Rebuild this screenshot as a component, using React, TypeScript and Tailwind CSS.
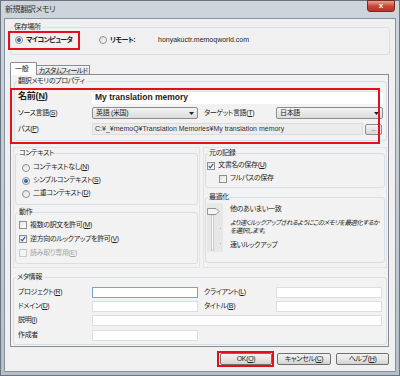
import React from "react";

function Acc({ t, k }: { t: string; k: string }) {
  return (
    <span className="whitespace-nowrap">
      {t}(<u>{k}</u>)
    </span>
  );
}

function Radio({ checked = false }: { checked?: boolean }) {
  return (
    <span className="w-[8px] h-[8px] shrink-0 rounded-full border border-[#8e8f8f] bg-linear-to-br from-[#dcdcdc] to-white flex items-center justify-center">
      {checked && <span className="w-[4px] h-[4px] rounded-full bg-[#2a6cb3]" />}
    </span>
  );
}

function Check({ checked = false, disabled = false }: { checked?: boolean; disabled?: boolean }) {
  return (
    <span
      className={
        "w-[8px] h-[8px] shrink-0 border flex items-center justify-center " +
        (disabled ? "border-[#c9c9c9] bg-[#f4f4f4]" : "border-[#8f8f8f] bg-linear-to-br from-[#e2e2e2] to-white")
      }
    >
      {checked && (
        <svg width="6" height="6" viewBox="0 0 6 6">
          <path d="M0.8 3.2 L2.3 4.8 L5.2 0.8" fill="none" stroke="#3b5a9e" strokeWidth="1.2" />
        </svg>
      )}
    </span>
  );
}

function Group({ title, className, children }: { title: string; className: string; children?: React.ReactNode }) {
  return (
    <fieldset className={"border border-[#d5dfe5] rounded-[3px] " + className}>
      <legend className="ml-[2px] px-[1px] leading-[10px]">{title}</legend>
      {children}
    </fieldset>
  );
}

function Select({ value, w }: { value: string; w: string }) {
  return (
    <div className={"h-[12px] border border-[#8c8c8c] rounded-[2px] bg-linear-to-b from-[#f3f3f3] to-[#dcdcdc] flex items-center justify-between pl-[3px] pr-[3px] " + w}>
      <span>{value}</span>
      <svg width="5" height="3" viewBox="0 0 5 3">
        <path d="M0 0 H5 L2.5 3 Z" fill="#222" />
      </svg>
    </div>
  );
}

function Field({ w, focus = false }: { w: string; focus?: boolean }) {
  return <div className={"h-[11px] bg-white border " + (focus ? "border-[#7da2ce]" : "border-[#dadde2]") + " " + w} />;
}

function Btn({ w, children }: { w: string; children: React.ReactNode }) {
  return (
    <div className={"h-[12px] rounded-[2px] border border-[#707070] bg-linear-to-b from-[#f2f2f2] via-[#e6e6e6] to-[#d2d2d2] flex items-center justify-center " + w}>
      {children}
    </div>
  );
}

export default function App() {
  return (
    <div className="relative w-[400px] h-[376px] border border-[#6b737c] bg-linear-to-b from-[#cdd4dc] to-[#b5bfca] flex flex-col text-[7px] tracking-[-0.35px] text-[#1e1e1e] font-['Liberation_Sans','Noto_Sans_CJK_JP',sans-serif] [font-feature-settings:'palt']">
      {/* title bar */}
      <div className="h-[17px] flex items-start justify-between">
        <span className="ml-[4px] mt-[3px] text-[8px] tracking-[-0.4px] text-[#333]">新規翻訳メモリ</span>
        <div className="mr-[4px] w-[28px] h-[12px] -mt-px rounded-b-[3px] border border-[#7a2a22] bg-linear-to-b from-[#e8a493] via-[#c9483a] to-[#b8312a] flex items-center justify-center text-white text-[8px] font-bold leading-none tracking-normal">
          x
        </div>
      </div>

      {/* client */}
      <div className="mx-[3px] h-[354px] border border-[#8593a1] bg-[#f0f0f0] flex flex-col">
        <Group title="保存場所" className="ml-[5px] mt-[3px] w-[380px] h-[33px]">
          <div className="mt-[2px] h-[12px] pl-[4px] flex items-center">
            <div className="w-[84px] flex items-center gap-[3px]">
              <Radio checked />
              <span className="font-bold tracking-[-0.7px]">マイコンピュータ</span>
            </div>
            <div className="w-[59px] flex items-center gap-[3px]">
              <Radio />
              <span className="font-bold tracking-[-0.5px]">リモート:</span>
            </div>
            <span className="tracking-normal">honyakuctr.memoqworld.com</span>
          </div>
        </Group>

        {/* tabs */}
        <div className="mt-[7px] ml-[5px] h-[13px] flex items-end">
          <div className="relative z-10 w-[27px] h-[13px] border border-b-0 border-[#898c95] rounded-t-[2px] bg-white pl-[4px] pt-[1px]">
            一般
          </div>
          <div className="w-[53px] h-[10px] border border-l-0 border-b-0 border-[#898c95] bg-linear-to-b from-[#f4f4f4] to-[#dadada] flex items-center justify-center leading-none tracking-[-0.7px] whitespace-nowrap">
            カスタムフィールド
          </div>
        </div>

        {/* tab page */}
        <div className="ml-[5px] -mt-px w-[379px] h-[273px] border border-[#898c95] bg-[#f2f2f2] flex flex-col">
          <Group title="翻訳メモリのプロパティ" className="ml-[3px] mt-[1px] w-[373px] h-[65px]">
            <div className="pt-[3px] px-[3px] flex flex-col">
              <div className="h-[16px] flex items-center">
                <span className="w-[74px] text-[9px] font-bold tracking-[-0.2px]">
                  名前(<u>N</u>)
                </span>
                <div className="flex-1 h-[13px] bg-white border-t border-[#e2e2e2] flex items-center pl-[3px] text-[8.5px] font-bold tracking-normal">
                  My translation memory
                </div>
              </div>
              <div className="h-[16px] flex items-center">
                <span className="w-[74px]">
                  <Acc t="ソース言語" k="S" />
                </span>
                <Select value="英語 (米国)" w="w-[106px]" />
                <span className="ml-[6px] w-[72px]">
                  <Acc t="ターゲット言語" k="T" />
                </span>
                <Select value="日本語" w="w-[107px]" />
              </div>
              <div className="h-[16px] flex items-center">
                <span className="w-[74px]">
                  <Acc t="パス" k="P" />
                </span>
                <div className="w-[271px] h-[12px] bg-[#ececec] border border-[#dcdcdc] flex items-center pl-[2px] text-[#333] whitespace-nowrap tracking-normal">
                  C:¥_¥memoQ¥Translation Memories¥My translation memory
                </div>
                <div className="ml-[2px] w-[17px] h-[11px] rounded-[2px] border border-[#8c8c8c] bg-linear-to-b from-[#f3f3f3] to-[#d6d6d6] flex items-center justify-center text-[6px] leading-none">
                  ...
                </div>
              </div>
            </div>
          </Group>

          {/* two columns */}
          <div className="mt-[6px] ml-[2px] h-[121px] flex gap-[3px]">
            <div className="w-[187px] border border-[#e0e4e8] flex flex-col">
              <Group title="コンテキスト" className="mx-[1px] h-[57px]">
                <div className="pt-[3px] pl-[6px] flex flex-col">
                  <div className="h-[13px] flex items-center gap-[3px]">
                    <Radio />
                    <Acc t="コンテキストなし" k="N" />
                  </div>
                  <div className="h-[13px] flex items-center gap-[3px]">
                    <Radio checked />
                    <Acc t="シンプルコンテキスト" k="S" />
                  </div>
                  <div className="h-[13px] flex items-center gap-[3px]">
                    <Radio />
                    <Acc t="二重コンテキスト" k="D" />
                  </div>
                </div>
              </Group>
              <Group title="動作" className="mx-[1px] mt-[2px] h-[57px]">
                <div className="pt-[1px] pl-[3px] flex flex-col">
                  <div className="h-[14px] flex items-center gap-[3px]">
                    <Check />
                    <Acc t="複数の訳文を許可" k="M" />
                  </div>
                  <div className="h-[14px] flex items-center gap-[3px]">
                    <Check checked />
                    <Acc t="逆方向のルックアップを許可" k="V" />
                  </div>
                  <div className="h-[14px] flex items-center gap-[3px] text-[#a3a3a3]">
                    <Check disabled />
                    <Acc t="読み取り専用" k="E" />
                  </div>
                </div>
              </Group>
            </div>

            <div className="w-[184px] border border-[#e0e4e8] flex flex-col">
              <Group title="元の記録" className="mx-[1px] h-[40px]">
                <div className="pt-[1px] pl-[1px] flex flex-col">
                  <div className="h-[13px] flex items-center gap-[3px]">
                    <Check checked />
                    <Acc t="文書名の保存" k="U" />
                  </div>
                  <div className="h-[13px] pl-[12px] flex items-center gap-[3px]">
                    <Check />
                    <span>フルパスの保存</span>
                  </div>
                </div>
              </Group>
              <Group title="最適化" className="mx-[1px] mt-[4px] h-[71px]">
                <div className="mt-[1px] pl-[1px] flex">
                  <div className="w-[16px] h-[49px] bg-[#e7e7e7]">
                    <svg width="16" height="49" viewBox="0 0 16 49">
                      <rect x="4.5" y="12" width="2" height="35" fill="#fdfdfd" stroke="#b0b0b0" strokeWidth="0.6" />
                      <path d="M0.5 5.5 H9 L12 8.5 L9 11.5 H0.5 Z" fill="#f4f4f4" stroke="#7d7d7d" strokeWidth="0.8" />
                      <rect x="13" y="25" width="1" height="1" fill="#b5b5b5" />
                      <rect x="13" y="40" width="1" height="1" fill="#b5b5b5" />
                    </svg>
                  </div>
                  <div className="ml-[7px] flex flex-col">
                    <span className="mt-[1px] leading-[10px]">他のあいまい一致</span>
                    <span className="mt-[5px] italic leading-[8px] text-[6.5px] tracking-[-0.55px] whitespace-nowrap">
                      より速くルックアップされるようにこのメモリを最適化するか
                    </span>
                    <span className="italic leading-[8px] text-[6.5px] tracking-[-0.55px]">を選択します。</span>
                    <span className="mt-[5px] leading-[10px]">速いルックアップ</span>
                  </div>
                </div>
              </Group>
            </div>
          </div>

          <Group title="メタ情報" className="ml-[2px] mt-[4px] w-[374px] h-[73px]">
            <div className="pt-[3px] pl-[4px] flex flex-col">
              <div className="h-[14px] flex items-center">
                <span className="w-[74px]">
                  <Acc t="プロジェクト" k="R" />
                </span>
                <Field w="w-[106px]" focus />
                <span className="ml-[6px] w-[72px]">
                  <Acc t="クライアント" k="L" />
                </span>
                <Field w="w-[106px]" />
              </div>
              <div className="h-[14px] flex items-center">
                <span className="w-[74px]">
                  <Acc t="ドメイン" k="D" />
                </span>
                <Field w="w-[106px]" />
                <span className="ml-[6px] w-[72px]">
                  <Acc t="タイトル" k="B" />
                </span>
                <Field w="w-[106px]" />
              </div>
              <div className="h-[15px] flex items-center">
                <span className="w-[74px]">
                  <Acc t="説明" k="I" />
                </span>
                <Field w="w-[290px]" />
              </div>
              <div className="h-[14px] flex items-center">
                <span className="w-[74px]">作成者</span>
                <Field w="w-[106px]" />
              </div>
            </div>
          </Group>
        </div>

        {/* buttons */}
        <div className="mt-[6px] mr-[6px] flex justify-end gap-[5px]">
          <Btn w="w-[52px]">
            OK(<u>O</u>)
          </Btn>
          <Btn w="w-[54px]">
            キャンセル(<u>C</u>)
          </Btn>
          <Btn w="w-[53px]">
            ヘルプ(<u>H</u>)
          </Btn>
        </div>
      </div>

      {/* red annotation boxes */}
      <div className="absolute left-[7px] top-[30px] w-[72px] h-[19px] border-2 border-[#e3101c]" />
      <div className="absolute left-[9px] top-[87px] w-[370px] h-[56px] border-2 border-[#e3101c]" />
      <div className="absolute left-[216px] top-[350px] w-[57px] h-[16px] border-2 border-[#e3101c]" />
    </div>
  );
}
